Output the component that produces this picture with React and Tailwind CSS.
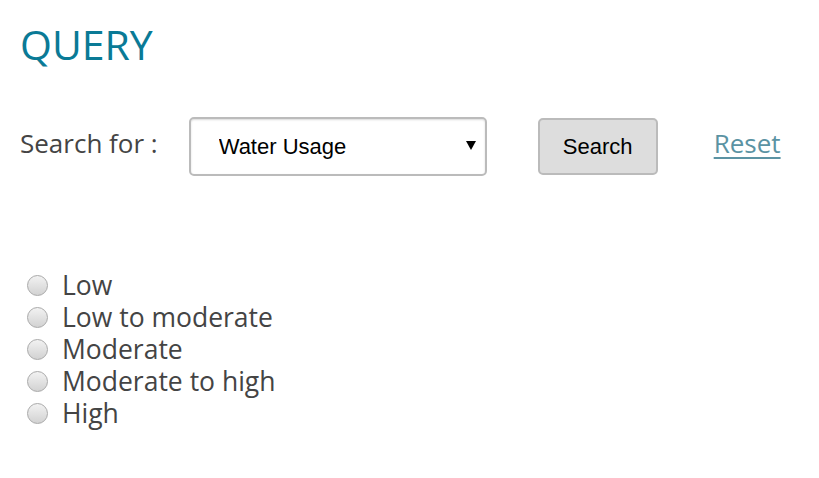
import { useState } from "react";

const levels = ["Low", "Low to moderate", "Moderate", "Moderate to high", "High"];

export default function App() {
  const [level, setLevel] = useState("");
  const [usage, setUsage] = useState("water");

  return (
    <div className="min-h-screen bg-white px-[20px] pt-[16px] font-['Open_Sans',sans-serif] text-[#444444]">
      <h1 className="text-[41px] leading-[56px] text-[#0a7a96]">QUERY</h1>

      <div className="mt-[45px] flex items-center">
        <span className="mb-[8px] text-[26px] leading-[32px]">Search for :</span>

        <div className="relative ml-[31px]">
          <select
            value={usage}
            onChange={(e) => setUsage(e.target.value)}
            className="h-[59px] w-[298px] appearance-none rounded-[5px] border-2 border-[#bbbbbb] bg-white pl-[28px] font-['Liberation_Sans',Arial,sans-serif] text-[22px] text-black shadow-[inset_0_1px_2px_rgba(0,0,0,0.15)] outline-none"
          >
            <option value="water">Water Usage</option>
            <option value="energy">Energy Usage</option>
          </select>
          <span className="pointer-events-none absolute right-[11px] top-[23px] text-[12px] leading-none text-black">
            <svg width="10" height="10" viewBox="0 0 10 10">
              <path d="M0 1h10L5 10z" fill="black" />
            </svg>
          </span>
        </div>

        <button className="ml-[51px] h-[57px] w-[120px] rounded-[5px] border-2 border-[#bbbbbb] bg-[#dddddd] font-['Liberation_Sans',Arial,sans-serif] text-[22px] text-black">
          Search
        </button>

        <a href="#" className="mb-[8px] ml-[56px] text-[26px] leading-[32px] text-[#5b93a3] underline underline-offset-[4px]">
          Reset
        </a>
      </div>

      <div className="mt-[93px] flex flex-col">
        {levels.map((name) => (
          <label key={name} className="flex h-[32px] items-center gap-[14px] pl-[7px]">
            <input
              type="radio"
              name="level"
              checked={level === name}
              onChange={() => setLevel(name)}
              className="h-[21px] w-[21px] appearance-none rounded-full border border-[#a9a9a9] bg-[linear-gradient(#f2f2f2,#d2d2d2)] checked:bg-[radial-gradient(#333_30%,#e6e6e6_35%)]"
            />
            <span className="text-[26.5px] leading-[30px]">{name}</span>
          </label>
        ))}
      </div>
    </div>
  );
}
